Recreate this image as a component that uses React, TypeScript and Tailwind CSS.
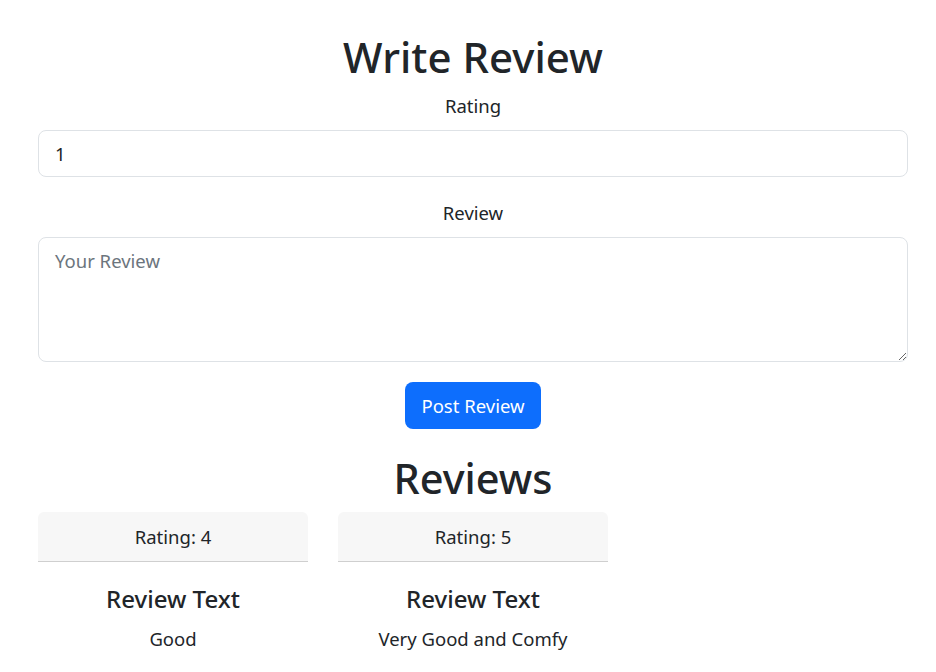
const reviews = [
  { rating: 4, text: 'Good' },
  { rating: 5, text: 'Very Good and Comfy' },
]

export default function App() {
  return (
    <div
      className="min-h-[672px] bg-white pl-[38px] pr-[28px] text-[#212529]"
      style={{ fontFamily: '"Noto Sans", "Open Sans", sans-serif' }}
    >
      <h1 className="pt-[33px] text-center text-[42px] font-medium leading-[48px]">Write Review</h1>

      <form className="flex flex-col">
        <label htmlFor="rating" className="mt-[13px] text-center text-[18.5px] leading-6">
          Rating
        </label>
        <input
          id="rating"
          type="text"
          defaultValue="1"
          className="mt-[12px] h-[47px] rounded-lg border border-[#dee2e6] px-4 text-[18.5px] text-[#212529] outline-none"
        />

        <label htmlFor="review" className="mt-[24px] text-center text-[18.5px] leading-6">
          Review
        </label>
        <textarea
          id="review"
          placeholder="Your Review"
          className="mt-[12px] h-[125px] rounded-lg border border-[#dee2e6] px-4 py-2 text-[18.5px] leading-[30px] placeholder:text-[#6c757d] outline-none"
        />

        <div className="mt-[20px] flex justify-center">
          <button
            type="button"
            className="h-[47px] rounded-lg bg-[#0d6efd] px-4 text-[18.5px] text-white"
          >
            Post Review
          </button>
        </div>
      </form>

      <h2 className="mt-[25px] text-center text-[41.5px] font-medium leading-[48px]">Reviews</h2>

      <div className="mt-[10px] flex gap-[30px]">
        {reviews.map((r) => (
          <div key={r.rating} className="w-[270px] rounded-md bg-white">
            <div className="flex h-[50px] items-center justify-center rounded-t-md border-b border-[#cfcfcf] bg-[#f7f7f7] text-[18.5px]">
              Rating: {r.rating}
            </div>
            <div className="px-4 pt-[22px] text-center">
              <h4 className="text-2xl font-medium leading-[29px]">Review Text</h4>
              <p className="mt-[14px] text-[18.5px] leading-6">{r.text}</p>
            </div>
          </div>
        ))}
      </div>
    </div>
  )
}
